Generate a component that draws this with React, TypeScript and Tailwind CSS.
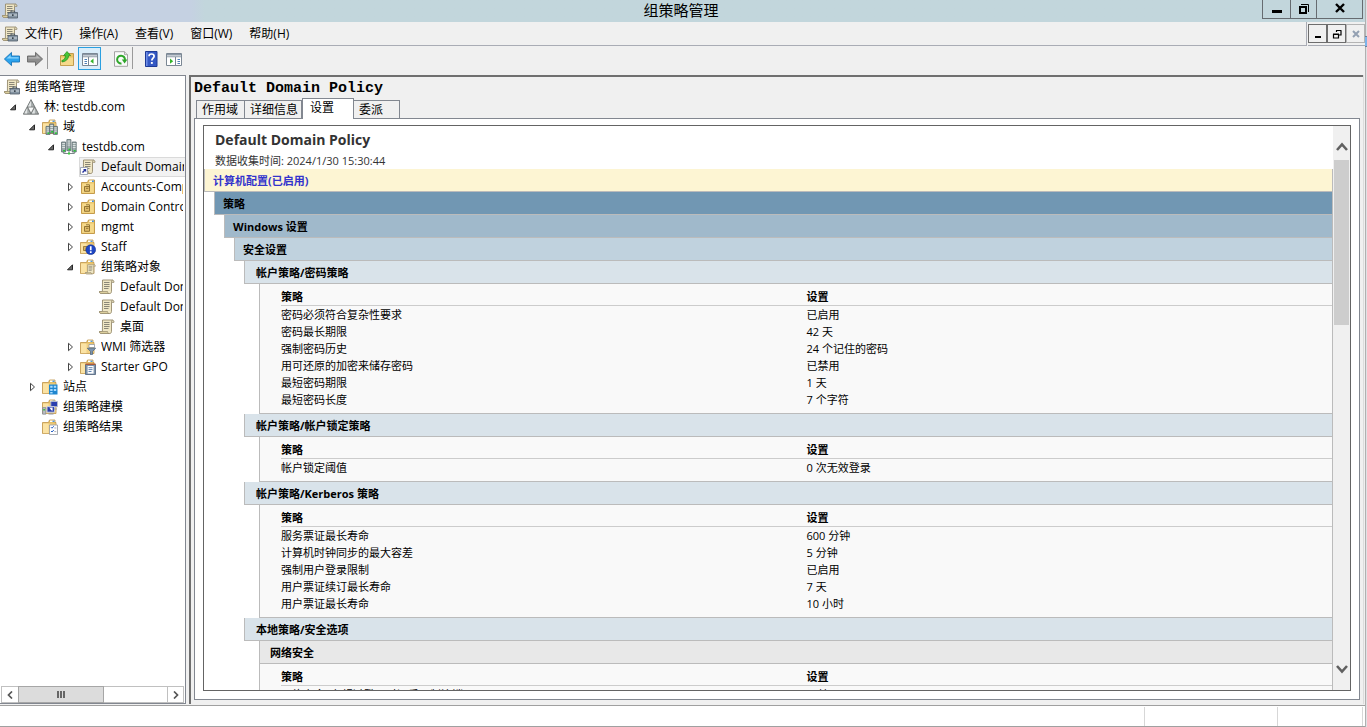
import type { ReactNode } from 'react';

/* ---------- icon parts, drawn on a 16 x 16 grid ---------- */

function Icon({ children, label }: { children: ReactNode; label?: string }) {
  return (
    <svg viewBox="0 0 16 16" className="size-4 shrink-0" aria-label={label} aria-hidden={label ? undefined : true}>
      {children}
    </svg>
  );
}

const Scroll = () => (
  <>
    <path d="M3.500 1h9.500c1.500 0 2 1 2 2.300h-2.500v9c0 1.500-.7 2.200-1.800 2.200H2.200c-1.200 0-1.800-.7-1.800-2h3z" fill="#efe6c4" stroke="#968b6e" strokeWidth=".9" />
    <path d="M.5 12.500h8c0 1.300.7 2 1.800 2H2.200c-1.200 0-1.700-.7-1.700-2z" fill="#dccf9d" stroke="#968b6e" strokeWidth=".7" />
    <path d="M12.500 3.300V3c0-1 .4-2 1.200-2" stroke="#968b6e" strokeWidth=".8" fill="none" />
    <path d="M5 3.500h5.500M5 5.500h5.500M5 7.500h5.500M5 9.500h4.500" stroke="#8a8677" />
  </>
);

const Folder = () => (
  <>
    <path d="M.5 3.500h6l1-2.500h5.500v2.500H14v11H.5z" fill="#e3bd62" stroke="#c0954a" strokeWidth=".8" />
    <path d="M8 1.500h4.500v1.500H8z" fill="#fff" />
    <path d="M10.500 1.600h2v1.300h-2z" fill="#3f8fdc" />
    <path d="M1 4.500h12.600v9.600H1z" fill="#f2d184" />
    <path d="M1 4.500h5.500v9.600H1z" fill="#fbe3a4" />
  </>
);

const Server = ({ x, y, h = 8 }: { x: number; y: number; h?: number }) => (
  <>
    <path d={`M${x} ${y}h4v${h}h-4z`} fill="#9ba9a9" stroke="#56666a" strokeWidth=".8" />
    <path d={`M${x + 0.6} ${y + 1.5}h2.800M${x + 0.6} ${y + 3.5}h2.800M${x + 0.6} ${y + 5.5}h2.800`} stroke="#e8eeee" strokeWidth=".8" />
    <path d={`M${x + 1.5} ${y + h - 2}h2v1.500h-2z`} fill="#25c931" />
  </>
);

function ConsoleIcon() {
  return (
    <Icon>
      <Scroll />
      <path d="M6 9.500h9.500v5.500H6z" fill="#8695a3" stroke="#4e5b68" strokeWidth=".8" />
      <path d="M9 9.300V8h3.600v1.300" stroke="#4e5b68" fill="none" />
      <path d="M6.500 12h8.600" stroke="#dae2e8" strokeWidth=".9" />
      <path d="M10 11.200h1.600v1.800H10z" fill="#39444e" />
    </Icon>
  );
}

function ForestIcon() {
  return (
    <Icon>
      <path d="M8 .6 15.700 15.200H.3z" fill="#7c8080" stroke="#6a6e6e" strokeWidth=".8" />
      <path d="M8 1.800 11 7.600H5zM4.200 9 7.200 14.400H1.300zM11.800 9l2.900 5.400H8.800z" fill="#a9aeae" />
      <path d="M8 1.800v5.800H5zM4.200 9v5.400H1.300zM11.800 9v5.400h-3z" fill="#e2e5e5" />
      <path d="M5.300 8.600h5.400L8 13.600z" fill="#f7f8f8" />
    </Icon>
  );
}

function DomainsIcon() {
  return (
    <Icon>
      <Folder />
      <Server x={4} y={7.4} />
      <Server x={11.4} y={7.4} />
      <Server x={7.7} y={5} h={9} />
    </Icon>
  );
}

function DomainIcon() {
  return (
    <Icon>
      <Server x={0.6} y={3} h={10} />
      <Server x={11.2} y={3} h={10} />
      <Server x={5.9} y={0.6} h={11} />
      <path d="M2.600 13v1.500h10.800V13M8 12v2" stroke="#7c8a8a" fill="none" />
      <path d="M7 13.500h2v2H7z" fill="#39cf3d" />
    </Icon>
  );
}

function LinkIcon() {
  return (
    <Icon>
      <Scroll />
      <path d="M.5 8.500h7v7h-7z" fill="#fff" stroke="#8a94a8" strokeWidth=".8" />
      <path d="M3 10h3.200v3.200L5 12l-2 2-1-1 2-2z" fill="#24309a" />
    </Icon>
  );
}

function GpoIcon() {
  return (
    <Icon>
      <Scroll />
    </Icon>
  );
}

function OuIcon() {
  return (
    <Icon>
      <path d="M1.500 3.500h6l1-2.500h6v13.500h-13z" fill="#eac56c" stroke="#bf9440" strokeWidth=".9" />
      <path d="M9.300 1.500h4.400V3H9.300z" fill="#fff" />
      <path d="M12 1.600h1.800v1.300H12z" fill="#3f8fdc" />
      <path d="M2.200 4.500h11.600v9.300H2.200z" fill="#f5d98b" />
      <path d="M4.500 7.500h5v4.800h-5z" fill="#e0bc68" stroke="#8a6c2c" strokeWidth=".9" />
      <path d="M6 5.800h3.500V9M6 9.300h2.400" stroke="#8a6c2c" strokeWidth=".9" fill="none" />
    </Icon>
  );
}

function OuBlockedIcon() {
  return (
    <Icon>
      <Folder />
      <path d="M3.500 7.500h4v4h-4z" fill="#d9b563" stroke="#8a6c2c" strokeWidth=".8" />
      <circle cx="10.700" cy="10.700" r="4.900" fill="#1f47c4" stroke="#14308f" strokeWidth=".6" />
      <path d="M9.900 7.300h1.700v4H9.900zM9.900 12.200h1.700v1.700H9.900z" fill="#fff" />
    </Icon>
  );
}

function GpoFolderIcon() {
  return (
    <Icon>
      <Folder />
      <g transform="translate(5.200 5) scale(.68)">
        <Scroll />
      </g>
    </Icon>
  );
}

function WmiIcon() {
  return (
    <Icon>
      <Folder />
      <path d="M9 5.500h5.500v3H9z" fill="#fff" stroke="#8a94a0" strokeWidth=".7" />
      <path d="M7.300 9.200h8.400l-3.200 3.300v3l-2 .3v-3.300z" fill="#7c93ad" stroke="#4b617b" strokeWidth=".7" />
    </Icon>
  );
}

function StarterIcon() {
  return (
    <Icon>
      <Folder />
      <path d="M5.500 5.500h10v10h-10z" fill="#7d93ab" stroke="#4c5f78" strokeWidth=".8" />
      <path d="M5.500 4.500h10v1.400h-10z" fill="#b25a35" />
      <path d="M7.600 7h6v7.600h-6z" fill="#fff" />
      <path d="M8.500 8.700h4M8.500 10.600h4M8.500 12.500h3" stroke="#4f75a8" strokeWidth=".9" />
    </Icon>
  );
}

function SitesIcon() {
  return (
    <Icon>
      <Folder />
      <path d="M7 5.500h8.500v10H7z" fill="#1f86cf" />
      <path d="M8.200 6.800h2.400v2H8.200zM11.800 6.800h2.400v2h-2.400zM8.200 10h2.400v2H8.200zM11.800 10h2.400v2h-2.400zM8.200 13h2.400v1.600H8.200z" fill="#a9dbff" />
    </Icon>
  );
}

function ModelingIcon() {
  return (
    <Icon>
      <Folder />
      <path d="M8.800 2.500h6.700v5.200H8.800z" fill="#2b3fae" stroke="#b9bfcf" strokeWidth=".9" />
      <path d="M5 7.600h7.600v5.600H5z" fill="#2b3fae" stroke="#c9cedc" />
      <path d="M7 8.800c1.500 0 1.500 3 3.600 3V8.600z" fill="#fff" />
      <path d="M.6 8.600h3.200v6.600H.6z" fill="#b9bdc4" stroke="#7d828b" strokeWidth=".7" />
      <path d="M1.300 10h1.600v1.400H1.300z" fill="#2fc437" />
      <path d="M6.500 15h5M12 10h3" stroke="#9499a5" />
    </Icon>
  );
}

function ResultsIcon() {
  return (
    <Icon>
      <Folder />
      <path d="M7.500 6h8v9.500h-8z" fill="#fff" stroke="#8f959e" strokeWidth=".8" />
      <path d="m9 8.200 1 1 1.800-2M9 12l1 1 1.800-2" stroke="#2a62c4" fill="none" />
      <path d="M12.300 9h2M12.300 12.600h2" stroke="#9aa0a8" strokeWidth=".8" />
    </Icon>
  );
}

/* ---------- title bar, menu and toolbar ---------- */

const captionButton = 'flex h-[19px] items-center justify-center border-b border-l border-[#666b70]';

function TitleBar() {
  return (
    <header className="flex h-[22px] shrink-0 items-start bg-linear-to-r from-[#c5d1e2] from-14% to-[#c2d6dc] to-15%">
      <div className="flex w-[100px] items-center pt-[3px] pl-0.5">
        <ConsoleIcon />
      </div>
      <h1 className="flex-1 text-center text-[15px] leading-[21px]">组策略管理</h1>
      <div className="mr-[2px] flex border-r border-[#666b70]">
        <button aria-label="最小化" className={`${captionButton} w-7`}>
          <svg viewBox="0 0 12 12" className="size-3"><path d="M1 7h10v3H1z" /></svg>
        </button>
        <button aria-label="还原" className={`${captionButton} w-[26px]`}>
          <svg viewBox="0 0 12 12" className="size-3" fill="none" stroke="#000">
            <path d="M2 4h6v6H2z" strokeWidth="2" />
            <path d="M3 1.500h7.500V9" />
          </svg>
        </button>
        <button aria-label="关闭" className={`${captionButton} w-[46px]`}>
          <svg viewBox="0 0 12 12" className="size-3"><path d="m2 1 8 8M10 1 2 9" stroke="#000" strokeWidth="2.400" /></svg>
        </button>
      </div>
    </header>
  );
}

const menus = ['文件(F)', '操作(A)', '查看(V)', '窗口(W)', '帮助(H)'];

function MenuBar() {
  return (
    <div className="flex h-6 shrink-0">
      <nav className="flex flex-1 items-center border-r border-b border-[#a9acb5] pl-0.5">
        <ConsoleIcon />
        <div className="flex gap-[17px] pl-[7px]">
          {menus.map((m) => (
            <button key={m} className="text-[12px] leading-5">{m}</button>
          ))}
        </div>
      </nav>
      <div className="ml-px flex items-start border-b border-[#a9acb5] pt-0.5">
        <button aria-label="最小化子窗口" className="flex h-[19px] w-[19px] items-center justify-center border border-[#6d6d6d]">
          <svg viewBox="0 0 12 12" className="size-3"><path d="M3 8h6v2H3z" /></svg>
        </button>
        <button aria-label="还原子窗口" className="flex h-[19px] w-[19px] items-center justify-center border border-[#6d6d6d]">
          <svg viewBox="0 0 12 12" className="size-3" fill="none" stroke="#000">
            <path d="M2.500 6.500h5v3.500h-5zM2 6h6M5 2.500h5.500M5.500 4V2.500M10 3v4H8" strokeWidth="1.200" />
          </svg>
        </button>
        <button aria-label="关闭子窗口" className="flex h-[19px] w-[19px] items-center justify-center border border-[#b4b4b4]">
          <svg viewBox="0 0 12 12" className="size-3"><path d="m3 3 6 6M9 3 3 9" stroke="#93a0b2" strokeWidth="2" /></svg>
        </button>
      </div>
    </div>
  );
}

const toolButton = 'flex size-[23px] items-center justify-center';

function Toolbar() {
  return (
    <div className="flex h-[29px] shrink-0 items-start pt-px">
      <button aria-label="后退" className={toolButton}>
        <svg viewBox="0 0 16 16" className="size-4 shrink-0">
          <path d="M.4 8 7.500 1.400v3.600h8v6h-8v3.600z" fill="#2ba3ee" stroke="#1874b8" strokeWidth=".9" />
          <path d="M2.500 7.500 6.600 4v2.200h8v1.300z" fill="#8ad4fb" />
        </svg>
      </button>
      <button aria-label="前进" className={toolButton}>
        <svg viewBox="0 0 16 16" className="size-4 shrink-0">
          <path d="M15.600 8 8.500 1.400v3.600h-8v6h8v3.600z" fill="#8d8d8d" stroke="#686868" strokeWidth=".9" />
          <path d="M13.500 7.500 9.400 4v2.200h-8v1.300z" fill="#b9b9b9" />
        </svg>
      </button>
      <span className="ml-px h-[22px] w-px bg-[#9a9a9a]" />
      <button aria-label="向上一级" className={`${toolButton} ml-[7px]`}>
        <Icon>
          <path d="M1.500 4.500h5l1.500-2h6.500v12h-13z" fill="#e9c263" stroke="#bd9342" strokeWidth=".9" />
          <path d="M2 6.500h12v7.600H2z" fill="#f6d98b" />
          <path d="M2.800 9.600C5 9 6.400 7.200 6.500 4.600H4.600L8 .5l3.600 4.100H9.700c-.3 3.600-2.600 5.900-6.600 6.400z" fill="#45c636" stroke="#258a1e" strokeWidth=".7" />
        </Icon>
      </button>
      <button aria-label="显示/隐藏控制台树" aria-pressed="true" className={`${toolButton} border border-[#2a9fe0] bg-[#daedf9]`}>
        <Icon>
          <path d="M.5 2.500h15v12H.5z" fill="#fff" stroke="#7b8794" />
          <path d="M1 3h14v1.600H1zM1 5.300h14v.9H1z" fill="#8c98a5" />
          <path d="M2.500 8.500h2.500M2.500 10.500h2.500M2.500 12.500h2.500" stroke="#4f7fb5" />
          <path d="M6.500 6v8.500" stroke="#7b8794" />
          <path d="M11.500 7.600v5.200L8.300 10.200z" fill="#35b52b" />
        </Icon>
      </button>
      <button aria-label="刷新" className={`${toolButton} ml-2`}>
        <Icon>
          <path d="M1.500 .7h10l3 3v11.600h-13z" fill="#fafafa" stroke="#9a9a9a" strokeWidth=".9" />
          <path d="M11.500 .7v3h3" fill="#e3e3e3" stroke="#9a9a9a" strokeWidth=".8" />
          <path d="M8.500 12.400A3.900 3.900 0 1 1 11.900 9" fill="none" stroke="#2fa62a" strokeWidth="2" />
          <path d="M8.800 8.500h5.600l-2.800 4z" fill="#2fa62a" />
        </Icon>
      </button>
      <span className="h-[22px] w-px bg-[#9a9a9a]" />
      <button aria-label="帮助" className={`${toolButton} ml-[6px]`}>
        <svg viewBox="0 0 16 16" className="size-4 shrink-0">
          <path d="M2.500 .5h11.500v15H2.500z" fill="#3458c4" stroke="#1d3a96" />
          <path d="M3 1h1.500v14H3z" fill="#6f8de6" />
          <path d="M6 5.300C6 3.600 7.200 3 8.500 3s2.600.8 2.600 2.300c0 1.900-2.300 2-2.300 4.300" fill="none" stroke="#fff" strokeWidth="1.700" />
          <path d="M7.900 11h1.900v1.900H7.900z" fill="#fff" />
        </svg>
      </button>
      <button aria-label="显示/隐藏操作窗格" className={toolButton}>
        <Icon>
          <path d="M.5 2.500h15v12H.5z" fill="#fff" stroke="#7b8794" />
          <path d="M1 3h14v1.600H1zM1 5.300h14v.9H1z" fill="#8c98a5" />
          <path d="M11.500 8.500h2.500M11.500 10.500h2.500M11.500 12.500h2.500" stroke="#4f7fb5" />
          <path d="M9.500 6v8.500" stroke="#7b8794" />
          <path d="M4 7.600v5.200l3.200-2.600z" fill="#35b52b" />
        </Icon>
      </button>
    </div>
  );
}

/* ---------- console tree ---------- */

type TreeNode = {
  label: string;
  icon: ReactNode;
  state?: 'open' | 'closed';
  selected?: boolean;
  children?: TreeNode[];
};

const tree: TreeNode[] = [
  {
    label: '林: testdb.com',
    icon: <ForestIcon />,
    state: 'open',
    children: [
      {
        label: '域',
        icon: <DomainsIcon />,
        state: 'open',
        children: [
          {
            label: 'testdb.com',
            icon: <DomainIcon />,
            state: 'open',
            children: [
              { label: 'Default Domain Policy', icon: <LinkIcon />, selected: true },
              { label: 'Accounts-Computers', icon: <OuIcon />, state: 'closed' },
              { label: 'Domain Controllers', icon: <OuIcon />, state: 'closed' },
              { label: 'mgmt', icon: <OuIcon />, state: 'closed' },
              { label: 'Staff', icon: <OuBlockedIcon />, state: 'closed' },
              {
                label: '组策略对象',
                icon: <GpoFolderIcon />,
                state: 'open',
                children: [
                  { label: 'Default Domain Controllers Policy', icon: <GpoIcon /> },
                  { label: 'Default Domain Policy', icon: <GpoIcon /> },
                  { label: '桌面', icon: <GpoIcon /> },
                ],
              },
              { label: 'WMI 筛选器', icon: <WmiIcon />, state: 'closed' },
              { label: 'Starter GPO', icon: <StarterIcon />, state: 'closed' },
            ],
          },
        ],
      },
      { label: '站点', icon: <SitesIcon />, state: 'closed' },
      { label: '组策略建模', icon: <ModelingIcon /> },
      { label: '组策略结果', icon: <ResultsIcon /> },
    ],
  },
];

function Expander({ state }: { state?: 'open' | 'closed' }) {
  return (
    <span className="flex w-4 shrink-0 items-center justify-center pr-0.5">
      {state && (
        <button aria-label={state === 'open' ? '折叠' : '展开'}>
          <svg viewBox="0 0 10 10" className="size-2.5">
            {state === 'open' ? (
              <path d="M7.500 2.800v5H2.500z" fill="#6a6a6a" stroke="#262626" />
            ) : (
              <path d="M3.500 1.300v7.400L7.500 5z" fill="#fff" stroke="#444" />
            )}
          </svg>
        </button>
      )}
    </span>
  );
}

function TreeItems({ nodes }: { nodes: TreeNode[] }) {
  return (
    <>
      {nodes.map((n, i) => (
        <li key={i} role="treeitem" aria-selected={!!n.selected}>
          <div className="flex h-5">
            <Expander state={n.state} />
            <span
              className={`flex min-w-0 flex-1 items-center gap-[5px] border pr-px whitespace-nowrap ${
                n.selected ? 'border-r-0 border-[#dadada] bg-[#f2f2f2]' : 'border-transparent'
              }`}
            >
              {n.icon}
              <span className="overflow-hidden leading-[18px]">{n.label}</span>
            </span>
          </div>
          {n.children && (
            <ul role="group" className="pl-[19px]">
              <TreeItems nodes={n.children} />
            </ul>
          )}
        </li>
      ))}
    </>
  );
}

function TreePane() {
  return (
    <aside className="flex w-[186px] shrink-0 flex-col border-t border-r border-b border-[#828790] bg-white">
      <ul role="tree" className="flex-1 overflow-hidden pt-px text-[12px]">
        <li role="treeitem" aria-selected="false">
          <div className="flex h-5 items-center gap-[5px] pl-1">
            <ConsoleIcon />
            <span>组策略管理</span>
          </div>
          <ul role="group" className="pl-[6px]">
            <TreeItems nodes={tree} />
          </ul>
        </li>
      </ul>
      <div className="mx-px flex h-[17px] shrink-0 border border-[#c0c0c0]">
        <button aria-label="向左滚动" className="flex w-4 items-center justify-center">
          <svg viewBox="0 0 8 8" className="size-2"><path d="M6 .5 2.500 4 6 7.500" fill="none" stroke="#555" strokeWidth="1.700" /></svg>
        </button>
        <div className="-my-px flex w-[86px] items-center justify-center gap-px border border-[#a6a6a6] bg-[#dcdcdc]">
          <span className="h-[7px] w-0.5 bg-[#666]" />
          <span className="h-[7px] w-0.5 bg-[#666]" />
          <span className="h-[7px] w-0.5 bg-[#666]" />
        </div>
        <div className="flex-1" />
        <button aria-label="向右滚动" className="flex w-4 items-center justify-center border-l border-[#c0c0c0]">
          <svg viewBox="0 0 8 8" className="size-2"><path d="M2 .5 5.500 4 2 7.500" fill="none" stroke="#555" strokeWidth="1.700" /></svg>
        </button>
      </div>
    </aside>
  );
}

/* ---------- settings report ---------- */

type Row = [string, string];

const headCell = 'h-[18px] border-b border-[#ccc] p-0 leading-[17px] font-bold';
const bodyCell = 'h-[17px] p-0 leading-[17px] whitespace-nowrap';

function SettingsTable({ rows }: { rows: Row[] }) {
  return (
    <div className="ml-[55px] border-b border-l border-[#bbb] bg-[#f9f9f9] pt-1 pb-[5px] pl-[21px]">
      <table className="w-full table-fixed border-separate border-spacing-0 text-left">
        <thead>
          <tr>
            <th className={headCell}>策略</th>
            <th className={headCell}>设置</th>
          </tr>
        </thead>
        <tbody>
          {rows.map(([name, value]) => (
            <tr key={name}>
              <td className={bodyCell}>{name}</td>
              <td className={bodyCell}>{value}</td>
            </tr>
          ))}
        </tbody>
      </table>
    </div>
  );
}

const bar = 'h-[23px] border-b border-l border-[#bbb] leading-[23px] font-bold';
const groupBar = `${bar} ml-10 bg-[#d9e3ea] pl-[11px]`;

const passwordRows: Row[] = [
  ['密码必须符合复杂性要求', '已启用'],
  ['密码最长期限', '42 天'],
  ['强制密码历史', '24 个记住的密码'],
  ['用可还原的加密来储存密码', '已禁用'],
  ['最短密码期限', '1 天'],
  ['最短密码长度', '7 个字符'],
];

const kerberosRows: Row[] = [
  ['服务票证最长寿命', '600 分钟'],
  ['计算机时钟同步的最大容差', '5 分钟'],
  ['强制用户登录限制', '已启用'],
  ['用户票证续订最长寿命', '7 天'],
  ['用户票证最长寿命', '10 小时'],
];

function Report() {
  return (
    <div className="min-w-0 flex-1 overflow-hidden text-[11px]">
      <div className="h-[43px] pl-[11px] text-[#333]">
        <h3 className="text-[14px] leading-[27px] font-bold">Default Domain Policy</h3>
        <p className="leading-4">数据收集时间: 2024/1/30 15:30:44</p>
      </div>
      <div className="border-r border-[#bbb]">
        <h4 className={`${bar} bg-[#fdf5d3] pl-2 text-[#3333cc]`}>计算机配置(已启用)</h4>
        <h4 className={`${bar} ml-[10px] bg-[#7197b3] pl-2`}>策略</h4>
        <h4 className={`${bar} ml-5 bg-[#a0b9cb] pl-2`}>Windows 设置</h4>
        <h4 className={`${bar} ml-[30px] bg-[#c0d2de] pl-2`}>安全设置</h4>
        <h5 className={groupBar}>帐户策略/密码策略</h5>
        <SettingsTable rows={passwordRows} />
        <h5 className={groupBar}>帐户策略/帐户锁定策略</h5>
        <SettingsTable rows={[['帐户锁定阈值', '0 次无效登录']]} />
        <h5 className={groupBar}>帐户策略/Kerberos 策略</h5>
        <SettingsTable rows={kerberosRows} />
        <h5 className={groupBar}>本地策略/安全选项</h5>
        <h6 className={`${bar} ml-[55px] bg-[#e8e8e8] pl-[10px]`}>网络安全</h6>
        <SettingsTable rows={[['网络安全: 在超过登录时间后强制注销', '已禁用']]} />
      </div>
    </div>
  );
}

const tabs = [
  { label: '作用域', width: 'w-[49px]' },
  { label: '详细信息', width: 'w-[57px]' },
  { label: '设置', width: 'w-[52px]', active: true },
  { label: '委派', width: 'w-[46px]' },
];

function DetailPane() {
  return (
    <main className="ml-[3px] flex min-w-0 flex-1 flex-col border-t-2 border-l-2 border-[#6f6f6f] bg-[#f0f0f0] pr-[3px] pb-1 pl-[3px]">
      <h2 className="pt-[3px] font-['Liberation_Mono','Noto_Sans_CJK_SC',monospace] text-[15px] leading-[18px] font-bold">Default Domain Policy</h2>
      <div role="tablist" className="flex items-end pl-0.5">
        {tabs.map((t) => (
          <button
            key={t.label}
            role="tab"
            aria-selected={!!t.active}
            className={`${t.width} border border-b-0 border-[#828790] text-left text-[12px] whitespace-nowrap ${
              t.active ? 'z-10 -mb-px h-[21px] bg-white pb-0.5 pl-[7px] leading-[18px]' : 'h-[18px] pl-[5px] leading-[18px] not-first:border-l-0'
            }`}
          >
            {t.label}
          </button>
        ))}
      </div>
      <div role="tabpanel" className="flex min-h-0 flex-1 border border-[#828790] bg-white pt-[6px] pr-2 pb-2 pl-2">
        <div className="flex min-w-0 flex-1 border border-[#646464]">
          <Report />
          <div className="flex w-[17px] shrink-0 flex-col items-center bg-[#f0f0f0] pt-[15px] pb-[15px]">
            <button aria-label="向上滚动" className="flex">
              <svg viewBox="0 0 12 12" className="size-3"><path d="M1 9 6 3.500 11 9" fill="none" stroke="#606060" strokeWidth="2.600" /></svg>
            </button>
            <div className="mt-[7px] h-[165px] w-[15px] bg-[#cdcdcd]" />
            <div className="flex-1" />
            <button aria-label="向下滚动" className="flex">
              <svg viewBox="0 0 12 12" className="size-3"><path d="m1 3 5 5.500L11 3" fill="none" stroke="#606060" strokeWidth="2.600" /></svg>
            </button>
          </div>
        </div>
      </div>
    </main>
  );
}

function StatusBar() {
  return (
    <footer className="mt-px flex h-[22px] shrink-0 border-t border-b border-[#a0a0a0] bg-white pt-px pr-0.5">
      <div className="flex-1 border-r border-[#d7d7d7]" />
      <div className="w-[133px] border-r border-[#d7d7d7]" />
      <div className="w-[85px] border-r border-[#d7d7d7]" />
    </footer>
  );
}

export default function App() {
  return (
    <div className="relative flex h-screen flex-col overflow-hidden bg-[#dfe1e4] pr-px font-['Open_Sans','Noto_Sans_CJK_SC',sans-serif] text-black">
      <div className="flex min-h-0 flex-1 flex-col border-r border-[#b0b0b0] bg-[#f0f0f0]">
        <TitleBar />
        <MenuBar />
        <Toolbar />
        <div className="flex min-h-0 flex-1">
          <TreePane />
          <DetailPane />
          <div className="w-0.5 shrink-0 border-l border-[#dcdcdc]" />
        </div>
        <StatusBar />
      </div>
      <span className="absolute top-9 right-0 h-[11px] w-0.5 border-y border-[#6f7f96] bg-[#7db4ea]" />
    </div>
  );
}
